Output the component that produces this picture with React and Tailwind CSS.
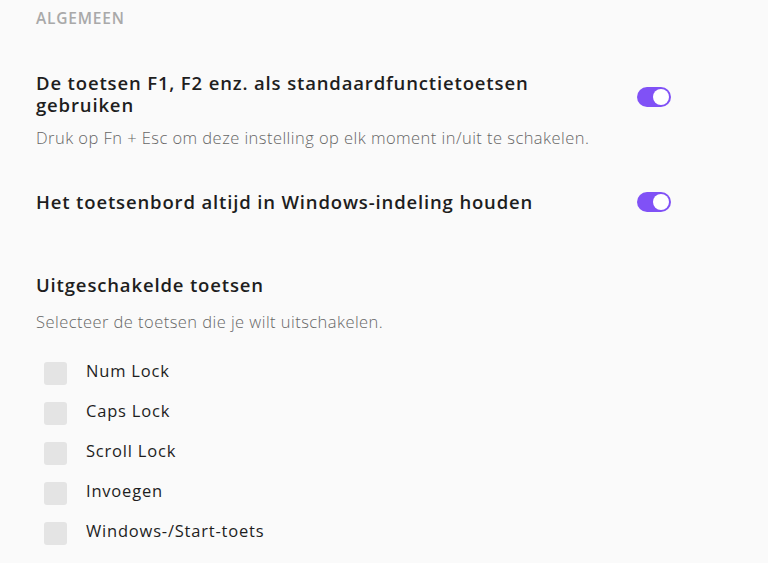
const Toggle = () => (
  <div className="w-[34px] h-[20px] rounded-full bg-[#8051f6] flex items-center justify-end px-[2px] shrink-0">
    <div className="w-[16px] h-[16px] rounded-full bg-white" />
  </div>
);

const keys = ["Num Lock", "Caps Lock", "Scroll Lock", "Invoegen", "Windows-/Start-toets"];

export default function App() {
  return (
    <div
      className="min-h-screen bg-[#fafafa] text-[#1e1e1e] pl-9"
      style={{ fontFamily: "'Open Sans', sans-serif" }}
    >
      <div className="w-[635px]">
        <div className="pt-[8px] text-[15.5px] leading-[20px] font-semibold tracking-[0.8px] text-[#a9a9a9]">
          ALGEMEEN
        </div>

        <div className="mt-[44px] flex items-start justify-between">
          <h2 className="text-[18.5px] font-semibold leading-[22px] tracking-[0.85px] w-[540px]">
            De toetsen F1, F2 enz. als standaardfunctietoetsen gebruiken
          </h2>
          <div className="mt-[15px]">
            <Toggle />
          </div>
        </div>
        <p className="mt-[11px] text-[16.5px] leading-[22px] font-light tracking-[0.45px] text-[#666]">
          Druk op Fn + Esc om deze instelling op elk moment in/uit te schakelen.
        </p>

        <div className="mt-[43px] flex items-center justify-between">
          <h2 className="text-[18.5px] font-semibold leading-[20px] tracking-[0.85px]">
            Het toetsenbord altijd in Windows-indeling houden
          </h2>
          <Toggle />
        </div>

        <h2 className="mt-[63px] text-[18.5px] font-semibold leading-[20px] tracking-[0.85px]">
          Uitgeschakelde toetsen
        </h2>
        <p className="mt-[16px] text-[16.5px] leading-[22px] font-light tracking-[0.45px] text-[#666]">
          Selecteer de toetsen die je wilt uitschakelen.
        </p>

        <div className="mt-[29px] flex flex-col gap-[17px] pl-2">
          {keys.map((k) => (
            <label key={k} className="flex items-start gap-[19px] h-[23px]">
              <span className="w-[23px] h-[23px] rounded-[3px] bg-[#e4e4e4] shrink-0" />
              <span className="text-[16.5px] leading-[18px] tracking-[0.8px] text-[#1e1e1e]">{k}</span>
            </label>
          ))}
        </div>
      </div>
    </div>
  );
}
